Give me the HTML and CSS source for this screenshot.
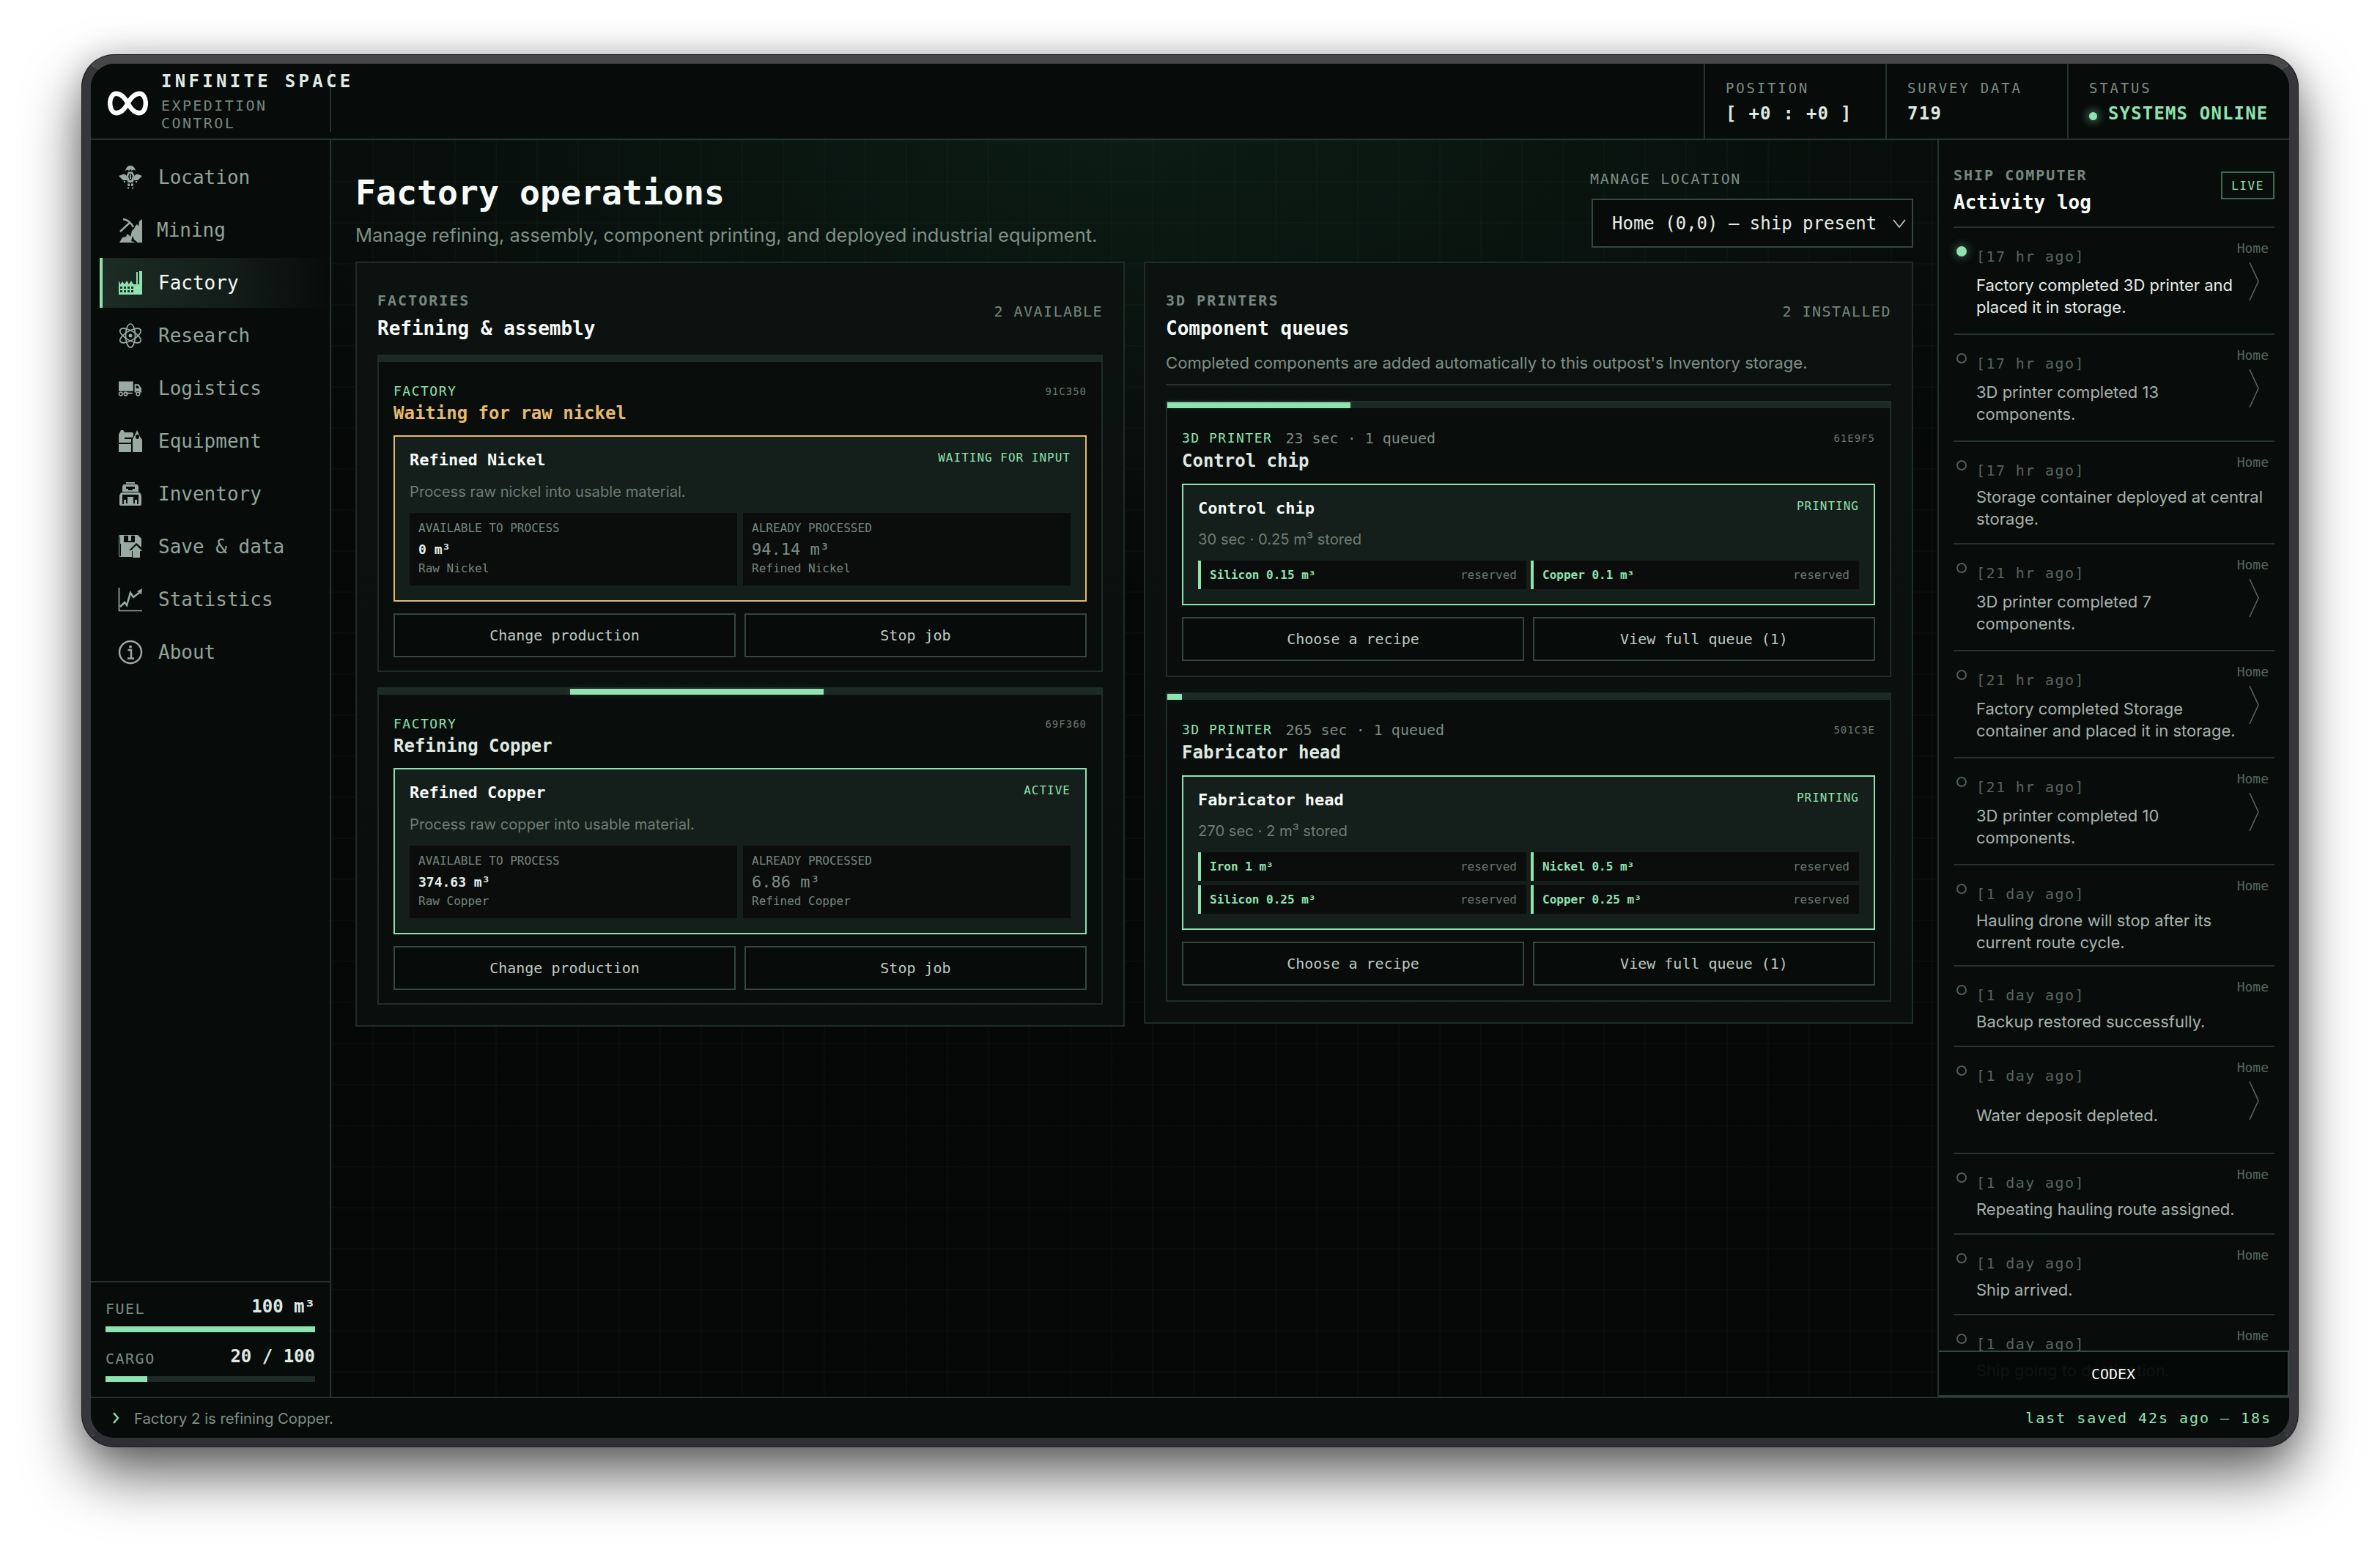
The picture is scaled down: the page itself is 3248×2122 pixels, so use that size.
FILE: index.html
```html
<!DOCTYPE html>
<html lang="en">
<head>
<meta charset="utf-8">
<title>Infinite Space</title>
<link rel="stylesheet" href="styles.css">
</head>
<body>
<div class="window">
  <header class="topbar">
    <div class="brand">
      <svg class="logo" viewBox="0 0 56 34" aria-hidden="true"><path d="M28 17C23 8 18 3.500 12 3.500C6.500 3.500 3.200 9.500 3.200 17C3.200 24.500 6.500 30.500 12 30.500C18 30.500 23 26 28 17C33 8 38 3.500 44 3.500C49.500 3.500 52.800 9.500 52.800 17C52.800 24.500 49.500 30.500 44 30.500C38 30.500 33 26 28 17Z"/></svg>
      <div class="brand-text">
        <div class="brand-name">INFINITE SPACE</div>
        <div class="brand-sub">EXPEDITION<br>CONTROL</div>
      </div>
    </div>
    <div class="top-spacer"></div>
    <div class="top-stat"><div class="top-label">POSITION</div><div class="top-value">[ +0 : +0 ]</div></div>
    <div class="top-stat"><div class="top-label">SURVEY DATA</div><div class="top-value">719</div></div>
    <div class="top-stat top-stat-last"><div class="top-label">STATUS</div><div class="top-value top-online"><span class="online-dot"></span>SYSTEMS ONLINE</div></div>
  </header>

  <div class="workspace">
    <aside class="sidebar">
      <nav class="nav">
        <a class="nav-item"><svg class="nav-icon" viewBox="0 0 32 32"><path class="fill" d="M16 0C12 0 10 3 9 7L12 5.500L14.500 7L16 4.500L17.500 7L20 5.500L23 7C22 3 20 0 16 0Z"/><path class="fill" d="M0 14L7 11.500L10 13L11.500 20L6 20ZM32 14L25 11.500L22 13L20.500 20L26 20Z"/><path class="fill" d="M13 8.500H19L22 15L19.500 23H12.500L10 15ZM14.500 11L13 15L15 20H17L19 15L17.500 11Z"/><path class="fill" d="M15 12H17V18H15ZM12 24.500H15V28H12.500ZM17 24.500H20L19.500 28H17ZM7 21H9V23H7ZM23 21H25V23H23ZM12 29.500H14V31.500H12ZM18 29.500H20V31.500H18Z"/></svg><span>Location</span></a>
        <a class="nav-item"><svg class="nav-icon" viewBox="0 0 32 32"><path class="line" d="M6 1C12 2 17 6 20 12M16 5L2 18"/><path class="fill" d="M1 33L5 26L10 25L12 21L16 25L18 17L21 14L23 10L25 8L27 11L28 4L32 1V33H26L21 29L19 24L17 31L23 33Z"/></svg><span class="nav-label-tight">Mining</span></a>
        <a class="nav-item nav-active"><svg class="nav-icon" viewBox="0 0 32 32"><path class="fill" d="M0 32V13L2.500 18L5 14L8 18L11 13L14 18L17 13L20 18H24V1H26V18H28V0H32V32ZM2 21V24H5V21ZM7 21V24H10V21ZM12 21V24H15V21ZM17 21V24H20V21ZM2 26V29H5V26ZM7 26V29H10V26ZM12 26V29H15V26ZM17 26V29H20V26Z"/></svg><span>Factory</span></a>
        <a class="nav-item"><svg class="nav-icon" viewBox="0 0 32 32"><g class="line thin"><ellipse cx="16" cy="16" rx="6.500" ry="16"/><ellipse cx="16" cy="16" rx="6.500" ry="16" transform="rotate(60 16 16)"/><ellipse cx="16" cy="16" rx="6.500" ry="16" transform="rotate(-60 16 16)"/></g><circle class="fill" cx="16" cy="16" r="2.500"/></svg><span>Research</span></a>
        <a class="nav-item"><svg class="nav-icon" viewBox="0 0 34 32"><path class="fill" d="M0 6H21V20H0ZM23 10H29L33 16V22H31A4 4 0 0 0 24 22H23ZM25 12V16H30L28 12ZM10 22H20V24H10Z"/><g class="line thin"><circle cx="3" cy="24" r="2.500"/><circle cx="10" cy="24" r="2.500"/><circle cx="28" cy="24" r="2.500"/></g></svg><span>Logistics</span></a>
        <a class="nav-item"><svg class="nav-icon" viewBox="0 0 32 32"><path class="fill" d="M0 20H17V31H0ZM0 18V7L3 1L6 1L8 4H18C19 4 20 5 20 6V9C20 10 19 11 18 11H9C7 11 7 13 9 13H17V18ZM19 13L21 10L25 1L29 10L32 14V31H19ZM25.500 7A2.500 3 0 1 0 25.500 13A2.500 3 0 1 0 25.500 7Z"/></svg><span>Equipment</span></a>
        <a class="nav-item"><svg class="nav-icon" viewBox="0 0 32 32"><path class="fill" d="M10 0H22V2H10ZM8 3H24C26 3 27 5 27 7V13H5V7C5 5 6 3 8 3ZM10 6V9H13V11H19V9H22V6ZM4 14H28C30 15 31 17 31 20V30C31 31 30 32 29 32H3C2 32 1 31 1 30V20C1 17 2 15 4 14ZM5 17V30H7V24H10V29H12V20H20V29H22V24H25V30H27V17Z"/></svg><span>Inventory</span></a>
        <a class="nav-item"><svg class="nav-icon" viewBox="0 0 32 32"><path class="fill" d="M2 0H26L31 5V17L24 11L14 21H18V30H2C1 30 0 29 0 28V2C0 1 1 0 2 0ZM7 1V10H22V1H17V8H13V1ZM1 2V29H3V12H2V2Z"/><path class="fill" d="M24 14L32 22H29V31H19V22H16Z"/></svg><span>Save &amp; data</span></a>
        <a class="nav-item"><svg class="nav-icon" viewBox="0 0 32 32"><path class="line thin" d="M0.500 0V31.500H32"/><path class="line" d="M2 26L8 20L11 24L16 7L20 13L29 6"/><path class="fill" d="M32 1L31 9L25 5Z"/></svg><span>Statistics</span></a>
        <a class="nav-item"><svg class="nav-icon" viewBox="0 0 32 32"><circle class="line" cx="16" cy="16" r="15"/><circle class="fill" cx="16" cy="8.500" r="2"/><path class="line" d="M12.500 13H17V24M12 24.500H21"/></svg><span>About</span></a>
      </nav>
      <div class="ship-stats">
        <div class="ship-row"><span class="ship-label">FUEL</span><span class="ship-value">100 m³</span></div>
        <div class="bar"><div class="bar-fill" style="width:100%"></div></div>
        <div class="ship-row ship-row-next"><span class="ship-label">CARGO</span><span class="ship-value">20 / 100</span></div>
        <div class="bar"><div class="bar-fill" style="width:20%"></div></div>
      </div>
    </aside>

    <main class="main">
      <div class="page-head">
        <div>
          <h1 class="page-title">Factory operations</h1>
          <p class="page-sub">Manage refining, assembly, component printing, and deployed industrial equipment.</p>
        </div>
        <div class="location">
          <div class="location-label">MANAGE LOCATION</div>
          <div class="select"><span>Home (0,0) – ship present</span><svg class="select-chev" viewBox="0 0 18 12"><path d="M1 1L9 11L17 1"/></svg></div>
        </div>
      </div>

      <div class="panels">
        <section class="panel">
          <div class="panel-head">
            <div>
              <div class="eyebrow">FACTORIES</div>
              <h2 class="panel-title">Refining &amp; assembly</h2>
            </div>
            <div class="panel-count">2 AVAILABLE</div>
          </div>

          <article class="card">
            <div class="track"></div>
            <div class="card-body">
              <div class="card-top"><div class="card-kind">FACTORY</div><div class="card-id">91C350</div></div>
              <h3 class="card-title card-title-warn">Waiting for raw nickel</h3>
              <div class="job job-warn">
                <div class="job-head"><div class="job-name">Refined Nickel</div><div class="job-status">WAITING FOR INPUT</div></div>
                <p class="job-desc">Process raw nickel into usable material.</p>
                <div class="metrics">
                  <div class="metric"><div class="metric-label">AVAILABLE TO PROCESS</div><div class="metric-value">0 m³</div><div class="metric-sub">Raw Nickel</div></div>
                  <div class="metric"><div class="metric-label">ALREADY PROCESSED</div><div class="metric-value metric-value-dim">94.14 m³</div><div class="metric-sub">Refined Nickel</div></div>
                </div>
              </div>
              <div class="actions"><button class="btn">Change production</button><button class="btn">Stop job</button></div>
            </div>
          </article>

          <article class="card card-next">
            <div class="track"><div class="track-fill" style="left:26.500%;width:35.100%"></div></div>
            <div class="card-body">
              <div class="card-top"><div class="card-kind">FACTORY</div><div class="card-id">69F360</div></div>
              <h3 class="card-title">Refining Copper</h3>
              <div class="job">
                <div class="job-head"><div class="job-name">Refined Copper</div><div class="job-status">ACTIVE</div></div>
                <p class="job-desc">Process raw copper into usable material.</p>
                <div class="metrics">
                  <div class="metric"><div class="metric-label">AVAILABLE TO PROCESS</div><div class="metric-value">374.63 m³</div><div class="metric-sub">Raw Copper</div></div>
                  <div class="metric"><div class="metric-label">ALREADY PROCESSED</div><div class="metric-value metric-value-dim">6.86 m³</div><div class="metric-sub">Refined Copper</div></div>
                </div>
              </div>
              <div class="actions"><button class="btn">Change production</button><button class="btn">Stop job</button></div>
            </div>
          </article>
        </section>

        <section class="panel">
          <div class="panel-head panel-head-rule">
            <div class="panel-head-row">
              <div>
                <div class="eyebrow">3D PRINTERS</div>
                <h2 class="panel-title">Component queues</h2>
              </div>
              <div class="panel-count">2 INSTALLED</div>
            </div>
            <p class="panel-desc">Completed components are added automatically to this outpost's Inventory storage.</p>
          </div>

          <article class="card">
            <div class="track"><div class="track-fill" style="left:0;width:25.400%"></div></div>
            <div class="card-body card-body-print">
              <div class="card-top card-top-print"><div class="card-kind-group"><span class="card-kind">3D PRINTER</span><span class="card-meta">23 sec · 1 queued</span></div><div class="card-id">61E9F5</div></div>
              <h3 class="card-title card-title-print">Control chip</h3>
              <div class="job">
                <div class="job-head"><div class="job-name">Control chip</div><div class="job-status">PRINTING</div></div>
                <p class="job-desc job-desc-print">30 sec · 0.25 m³ stored</p>
                <div class="materials">
                  <div class="material"><span class="material-name">Silicon 0.15 m³</span><span class="material-state">reserved</span></div>
                  <div class="material"><span class="material-name">Copper 0.1 m³</span><span class="material-state">reserved</span></div>
                </div>
              </div>
              <div class="actions"><button class="btn">Choose a recipe</button><button class="btn">View full queue (1)</button></div>
            </div>
          </article>

          <article class="card card-next">
            <div class="track"><div class="track-fill" style="left:0;width:2%"></div></div>
            <div class="card-body card-body-print">
              <div class="card-top card-top-print"><div class="card-kind-group"><span class="card-kind">3D PRINTER</span><span class="card-meta">265 sec · 1 queued</span></div><div class="card-id">501C3E</div></div>
              <h3 class="card-title card-title-print">Fabricator head</h3>
              <div class="job">
                <div class="job-head"><div class="job-name">Fabricator head</div><div class="job-status">PRINTING</div></div>
                <p class="job-desc job-desc-print">270 sec · 2 m³ stored</p>
                <div class="materials">
                  <div class="material"><span class="material-name">Iron 1 m³</span><span class="material-state">reserved</span></div>
                  <div class="material"><span class="material-name">Nickel 0.5 m³</span><span class="material-state">reserved</span></div>
                  <div class="material"><span class="material-name">Silicon 0.25 m³</span><span class="material-state">reserved</span></div>
                  <div class="material"><span class="material-name">Copper 0.25 m³</span><span class="material-state">reserved</span></div>
                </div>
              </div>
              <div class="actions"><button class="btn">Choose a recipe</button><button class="btn">View full queue (1)</button></div>
            </div>
          </article>
        </section>
      </div>
    </main>

    <aside class="computer">
      <div class="computer-head">
        <div>
          <div class="eyebrow">SHIP COMPUTER</div>
          <h2 class="computer-title">Activity log</h2>
        </div>
        <div class="live">LIVE</div>
      </div>
      <ol class="log">
        <li class="log-item log-item-new"><span class="log-dot"></span><span class="log-time">[17 hr ago]</span><p class="log-msg">Factory completed 3D printer and placed it in storage.</p><div class="log-side"><span class="log-place">Home</span><svg class="log-arrow" viewBox="0 0 14 54"><path d="M1 1L13 27L1 53"/></svg></div></li>
        <li class="log-item"><span class="log-dot"></span><span class="log-time">[17 hr ago]</span><p class="log-msg">3D printer completed 13 components.</p><div class="log-side"><span class="log-place">Home</span><svg class="log-arrow" viewBox="0 0 14 54"><path d="M1 1L13 27L1 53"/></svg></div></li>
        <li class="log-item log-item-plain"><span class="log-dot"></span><span class="log-time">[17 hr ago]</span><p class="log-msg">Storage container deployed at central storage.</p><div class="log-side"><span class="log-place">Home</span></div></li>
        <li class="log-item"><span class="log-dot"></span><span class="log-time">[21 hr ago]</span><p class="log-msg">3D printer completed 7 components.</p><div class="log-side"><span class="log-place">Home</span><svg class="log-arrow" viewBox="0 0 14 54"><path d="M1 1L13 27L1 53"/></svg></div></li>
        <li class="log-item"><span class="log-dot"></span><span class="log-time">[21 hr ago]</span><p class="log-msg">Factory completed Storage container and placed it in storage.</p><div class="log-side"><span class="log-place">Home</span><svg class="log-arrow" viewBox="0 0 14 54"><path d="M1 1L13 27L1 53"/></svg></div></li>
        <li class="log-item"><span class="log-dot"></span><span class="log-time">[21 hr ago]</span><p class="log-msg">3D printer completed 10 components.</p><div class="log-side"><span class="log-place">Home</span><svg class="log-arrow" viewBox="0 0 14 54"><path d="M1 1L13 27L1 53"/></svg></div></li>
        <li class="log-item log-item-plain log-item-short"><span class="log-dot"></span><span class="log-time">[1 day ago]</span><p class="log-msg">Hauling drone will stop after its current route cycle.</p><div class="log-side"><span class="log-place">Home</span></div></li>
        <li class="log-item log-item-plain"><span class="log-dot"></span><span class="log-time">[1 day ago]</span><p class="log-msg">Backup restored successfully.</p><div class="log-side"><span class="log-place">Home</span></div></li>
        <li class="log-item"><span class="log-dot"></span><span class="log-time">[1 day ago]</span><p class="log-msg">Water deposit depleted.</p><div class="log-side"><span class="log-place">Home</span><svg class="log-arrow" viewBox="0 0 14 54"><path d="M1 1L13 27L1 53"/></svg></div></li>
        <li class="log-item log-item-plain"><span class="log-dot"></span><span class="log-time">[1 day ago]</span><p class="log-msg">Repeating hauling route assigned.</p><div class="log-side"><span class="log-place">Home</span></div></li>
        <li class="log-item log-item-plain"><span class="log-dot"></span><span class="log-time">[1 day ago]</span><p class="log-msg">Ship arrived.</p><div class="log-side"><span class="log-place">Home</span></div></li>
        <li class="log-item log-item-plain"><span class="log-dot"></span><span class="log-time">[1 day ago]</span><p class="log-msg">Ship going to destination.</p><div class="log-side"><span class="log-place">Home</span></div></li>
      </ol>
      <button class="codex">CODEX</button>
    </aside>
  </div>

  <footer class="statusbar">
    <div class="status-left"><svg class="status-chev" viewBox="0 0 10 18"><path d="M2 2L8 9L2 16"/></svg><span>Factory 2 is refining Copper.</span></div>
    <div class="status-right">last saved 42s ago – 18s</div>
  </footer>
</div>
</body>
</html>
```
FILE: styles.css
```css
* { box-sizing: border-box; }
html, body { margin: 0; height: 100%; }
body {
  background: #ffffff;
  font-family: "DejaVu Sans Mono", "Liberation Mono", monospace;
  color: #e6eee9;
  overflow: hidden;
}
h1, h2, h3, p, ol { margin: 0; padding: 0; }
ol { list-style: none; }

.window {
  width: 3024px;
  height: 1899px;
  margin: 75px auto 0;
  border: 12px solid;
  border-color: #47474a #37373b #2f3034 #37373b;
  border-radius: 44px;
  background: #070b0a;
  box-shadow: 0 0 0 1px #1a1a1c, 0 38px 80px rgba(0, 0, 0, .62), 0 0 40px rgba(0, 0, 0, .18);
  display: flex;
  flex-direction: column;
  overflow: hidden;
}

/* top bar */
.topbar {
  height: 104px;
  flex: none;
  display: flex;
  border-bottom: 2px solid #24332d;
  background: #070b0a;
}
.brand {
  width: 328px;
  height: 84px;
  margin-top: 9px;
  padding-left: 23px;
  display: flex;
  align-items: center;
  gap: 18px;
  border-right: 2px solid #24332d;
  white-space: nowrap;
}
.logo { width: 55px; height: 34px; flex: none; margin-top: 6px; }
.logo path { fill: none; stroke: #fff; stroke-width: 6.500; }
.brand-text { margin-top: 0; }
.brand-name { font-size: 24px; line-height: 30px; font-weight: 700; letter-spacing: 4.300px; color: #dfe9e3; }
.brand-sub { font-size: 20px; line-height: 24px; letter-spacing: 2.400px; color: #76877f; margin-top: 6px; }
.top-spacer { flex: 1; }
.top-stat { width: 248px; border-left: 2px solid #24332d; padding: 21px 0 0 28px; white-space: nowrap; }
.top-stat-last { width: 303px; }
.top-label { font-size: 19px; line-height: 24px; letter-spacing: 2.800px; color: #7b8c84; }
.top-value { font-size: 24px; line-height: 34px; margin-top: 6px; font-weight: 700; letter-spacing: 1.250px; color: #dfe9e3; }
.top-online { color: #8fe3b0; display: flex; align-items: center; letter-spacing: 1.150px; }
.online-dot { width: 11px; height: 11px; border-radius: 50%; background: #8fe3b0; margin: 6px 15px 0 0; box-shadow: 0 0 12px 3px rgba(143, 227, 176, .45); }

/* workspace */
.workspace { flex: 1; min-height: 0; display: grid; grid-template-columns: 328px 1fr 480px; }

.sidebar { border-right: 2px solid #24332d; display: flex; flex-direction: column; background: #070c0b; }
.nav { flex: 1; display: flex; flex-direction: column; gap: 4px; padding-top: 17px; }
.nav-item {
  height: 68px;
  margin-left: 12px;
  padding-left: 22px;
  border-left: 4px solid transparent;
  display: flex;
  align-items: center;
  gap: 22px;
  font-size: 26px;
  color: #92a39b;
  white-space: nowrap;
}
.nav-active { border-left-color: #8fe3b0; color: #f4f9f6; background: linear-gradient(90deg, #1d2c25 0%, #131d19 55%, rgba(19, 29, 25, 0) 100%); }
.nav-icon { width: 32px; height: 32px; flex: none; overflow: visible; }
.fill { fill: #9aaaa2; fill-rule: evenodd; }
.line { fill: none; stroke: #9aaaa2; stroke-width: 2.500; }
.thin { stroke-width: 1.700; }
.nav-active .fill { fill: #8fe3b0; }
.nav-label-tight { margin-left: -2px; }

.ship-stats { border-top: 2px solid #24332d; padding: 17px 20px 20px; }
.ship-row { display: flex; justify-content: space-between; align-items: flex-end; height: 32px; white-space: nowrap; }
.ship-row-next { margin-top: 17px; }
.ship-label { font-size: 20px; line-height: 28px; letter-spacing: 1.500px; color: #7b8c84; margin-bottom: -1px; }
.ship-value { font-size: 24px; line-height: 32px; font-weight: 700; color: #dfe9e3; }
.bar { height: 8px; margin-top: 11px; background: #1e2a24; }
.bar-fill { height: 100%; background: #8fe3b0; }

/* main */
.main {
  min-width: 0;
  padding: 39px 33px 0;
  background-color: #050807;
  background-image:
    radial-gradient(1500px 620px at 50% 0, rgba(28, 70, 50, .32), rgba(28, 70, 50, 0) 100%),
    linear-gradient(rgba(143, 227, 176, .022) 2px, transparent 2px),
    linear-gradient(90deg, rgba(143, 227, 176, .022) 2px, transparent 2px);
  background-size: 100% 100%, 56px 56px, 56px 56px;
}
.page-head { display: flex; justify-content: space-between; align-items: flex-start; margin-bottom: 19px; white-space: nowrap; }
.page-title { font-size: 46.500px; line-height: 56px; font-weight: 700; padding-top: 5px; color: #f6fbf8; }
.page-sub { font-family: Inter, "Noto Sans", sans-serif; font-size: 25.500px; line-height: 32px; margin-top: 14px; color: #7f9088; }
.location { width: 439px; padding-top: 2px; }
.location-label { font-size: 20px; line-height: 24px; letter-spacing: 1.700px; color: #7b8c84; margin-left: -2px; }
.select {
  height: 67px;
  margin-top: 15px;
  border: 2px solid #33473e;
  background: #070b0a;
  padding-left: 26px;
  padding-right: 8px;
  display: flex;
  align-items: center;
  justify-content: space-between;
  font-size: 24px;
  color: #e6eee9;
}
.select-chev { width: 18px; height: 12px; }
.select-chev path { fill: none; stroke: #c4d0c9; stroke-width: 1.600; }

.panels { display: grid; grid-template-columns: 1fr 1fr; gap: 26px; align-items: start; }
.panel {
  border: 2px solid #1e2c27;
  background: linear-gradient(180deg, #0c1210 0%, #0a0f0e 100%);
  padding: 39px 28px 28px;
}
.panel-head { display: flex; justify-content: space-between; align-items: flex-start; margin-bottom: 20px; }
.panel-head-rule { display: block; border-bottom: 2px solid #24332d; padding-bottom: 14px; margin-bottom: 21px; }
.panel-head-row { display: flex; justify-content: space-between; align-items: flex-start; }
.eyebrow { font-size: 20px; line-height: 24px; font-weight: 700; letter-spacing: 2px; color: #76877f; }
.panel-title { font-size: 26px; line-height: 32px; font-weight: 700; margin-top: 10px; color: #f6fbf8; }
.panel-count { font-size: 20px; line-height: 24px; letter-spacing: 1.450px; color: #76877f; margin-top: 15px; }
.panel-desc { font-family: Inter, "Noto Sans", sans-serif; font-size: 22.100px; line-height: 30px; margin-top: 16px; color: #7f9088; white-space: nowrap; }

.card { border: 2px solid #1f2d28; background: #090d0c; }
.card-next { margin-top: 21px; }
.track { position: relative; height: 8px; background: #1d2a24; }
.track-fill { position: absolute; top: 0; bottom: 0; background: #8fe3b0; box-shadow: 0 0 8px rgba(143, 227, 176, .12); }
.card-body { padding: 28px 20px 18px; }
.card-body-print { padding: 26px 20px 20px; }
.card-top { display: flex; justify-content: space-between; align-items: center; height: 24px; }
.card-top-print { height: 30px; }
.card-kind { font-size: 18px; line-height: 24px; letter-spacing: 1.500px; color: #8fe3b0; white-space: nowrap; }
.card-kind-group { display: flex; align-items: center; gap: 18px; }
.card-meta { font-size: 20px; line-height: 30px; color: #7b8c84; white-space: nowrap; }
.card-id { font-size: 14px; letter-spacing: 1px; color: #68786f; }
.card-title { font-size: 24px; line-height: 32px; font-weight: 700; margin-top: 2px; color: #dfe9e3; }
.card-title-warn { color: #e5b96e; }
.card-title-print { margin-top: 0; }

.job { margin-top: 14px; border: 2px solid #8fe3b0; background: #141e1a; padding: 17px 20px 20px; }
.card-title-print + .job { margin-top: 15px; }
.job-warn { border-color: #e5b96e; }
.job-head { display: flex; justify-content: space-between; align-items: flex-start; height: 30px; }
.job-name { font-size: 22px; line-height: 30px; font-weight: 700; color: #f6fbf8; }
.job-status { font-size: 16px; line-height: 24px; letter-spacing: 1px; color: #8fe3b0; }
.job-desc { font-family: Inter, "Noto Sans", sans-serif; font-size: 20.200px; line-height: 30px; margin-top: 13px; color: #6d7d75; }
.job-desc-print { margin-top: 12px; }
.metrics { display: grid; grid-template-columns: 1fr 1fr; gap: 8px; margin-top: 14px; }
.metric { background: #0a0d0c; padding: 10px 12px 12px; height: 99px; }
.metric-label { font-size: 16px; line-height: 22px; color: #76877f; }
.metric-value { font-size: 18px; line-height: 28px; margin-top: 4px; font-weight: 700; color: #e6eee9; }
.metric-value-dim { font-size: 22px; font-weight: 400; color: #7b8c84; }
.metric-sub { font-size: 16px; line-height: 22px; margin-top: 1px; color: #76877f; }
.materials { display: grid; grid-template-columns: 1fr 1fr; gap: 6px; margin-top: 14px; }
.material { height: 39px; background: #0a0d0c; border-left: 4px solid #8fe3b0; padding: 0 13px 0 12px; display: flex; justify-content: space-between; align-items: center; }
.material-name { font-size: 16px; font-weight: 700; color: #8fe3b0; }
.material-state { font-size: 16px; color: #68786f; }

.actions { display: grid; grid-template-columns: 1fr 1fr; gap: 12px; margin-top: 16px; }
.btn {
  height: 60px;
  background: #070b0a;
  border: 2px solid #33473e;
  font-family: inherit;
  font-size: 20px;
  color: #bcc9c2;
  padding: 0;
}

/* right panel */
.computer { position: relative; overflow: hidden; border-left: 2px solid #24332d; padding: 0 20px; background: #080c0b; }
.computer-head { height: 120px; padding-top: 36px; border-bottom: 2px solid #24332d; display: flex; justify-content: space-between; align-items: flex-start; }
.computer-title { font-size: 26px; line-height: 32px; margin-top: 9px; font-weight: 700; color: #f6fbf8; }
.live { width: 73px; height: 38px; margin-top: 7px; border: 2px solid #3f6a52; font-size: 16px; letter-spacing: 1.500px; color: #8fe3b0; display: flex; align-items: center; justify-content: center; }
.log-item {
  display: grid;
  grid-template-columns: 27px 1fr auto;
  grid-template-rows: auto auto;
  padding: 16px 8px 18px 4px;
  border-bottom: 2px solid #24332d;
}
.log-item-short { padding-bottom: 16px; }
.log-dot { grid-column: 1; grid-row: 1; width: 14px; height: 14px; margin-top: 9px; border-radius: 50%; border: 2px solid #4f6058; }
.log-item-new .log-dot { background: #8fe3b0; border-color: #8fe3b0; box-shadow: 0 0 12px 3px rgba(143, 227, 176, .28); }
.log-time { grid-column: 2; grid-row: 1; font-size: 20px; line-height: 26px; letter-spacing: 1.400px; padding: 10px 0 8px; color: #56655e; }
.log-msg { grid-column: 2; grid-row: 2; font-family: Inter, "Noto Sans", sans-serif; font-size: 22px; line-height: 30px; color: #a6b3ac; }
.log-item-new .log-msg { color: #e6eee9; }
.log-item-plain .log-msg { grid-column: 2 / 4; }
.log-side { grid-column: 3; grid-row: 1 / 3; display: flex; flex-direction: column; align-items: flex-end; margin-left: -6px; }
.log-item-plain .log-side { grid-row: 1; }
.log-place { font-size: 18px; line-height: 24px; color: #56655e; }
.log-arrow { width: 14px; height: 54px; margin: 6px 13px 26px 0; }
.log-arrow path { fill: none; stroke: #56655e; stroke-width: 1.600; }
.codex {
  position: absolute;
  left: -2px;
  right: 0;
  bottom: 0;
  height: 63px;
  border: 2px solid #33473e;
  background: rgba(4, 8, 7, .94);
  font-family: inherit;
  font-size: 20px;
  color: #f6fbf8;
  padding: 0;
}

/* status bar */
.statusbar {
  height: 56px;
  flex: none;
  border-top: 2px solid #24332d;
  display: flex;
  justify-content: space-between;
  align-items: center;
  padding: 0 24px 0 29px;
  background: #070b0a;
}
.status-left { display: flex; align-items: center; gap: 20px; font-family: Inter, "Noto Sans", sans-serif; font-size: 20.300px; color: #7f9088; }
.status-chev { width: 10px; height: 18px; }
.status-chev path { fill: none; stroke: #8fe3b0; stroke-width: 2.400; }
.status-right { font-size: 20px; letter-spacing: 1.950px; color: #8fe3b0; }
```
